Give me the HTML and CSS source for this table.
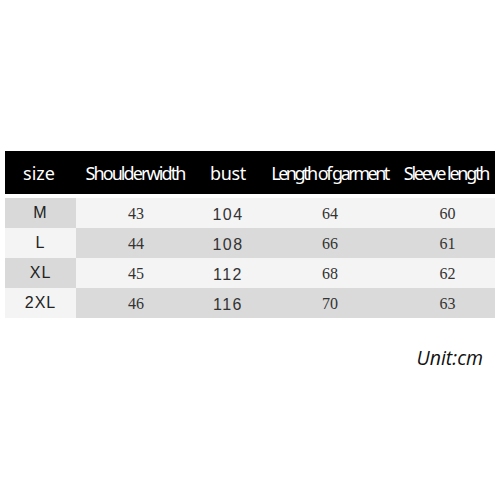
FILE: index.html
```html
<!DOCTYPE html>
<html>
<head>
<meta charset="utf-8">
<link rel="stylesheet" href="styles.css">
</head>
<body>
<div class="page">
  <div class="table">
    <div class="head">
      <div class="hc first">size</div>
      <div class="hc tight">Shoulderwidth</div>
      <div class="hc bust">bust</div>
      <div class="hc tight garment">Length of garment</div>
      <div class="hc tight sleeve">Sleeve length</div>
    </div>
    <div class="row odd">
      <div class="c sz">M</div><div class="c num">43</div><div class="c sans">104</div><div class="c num">64</div><div class="c num">60</div>
    </div>
    <div class="row even">
      <div class="c sz">L</div><div class="c num">44</div><div class="c sans">108</div><div class="c num">66</div><div class="c num">61</div>
    </div>
    <div class="row odd">
      <div class="c sz">XL</div><div class="c num">45</div><div class="c sans">112</div><div class="c num">68</div><div class="c num">62</div>
    </div>
    <div class="row even">
      <div class="c sz">2XL</div><div class="c num">46</div><div class="c sans">116</div><div class="c num">70</div><div class="c num">63</div>
    </div>
  </div>
  <div class="unit">Unit:cm</div>
</div>
</body>
</html>
```
FILE: styles.css
```css
html, body {
  margin: 0;
  padding: 0;
  background: #ffffff;
}
.page {
  width: 500px;
  height: 500px;
  padding-top: 151px;
  box-sizing: border-box;
}
.table {
  margin-left: 5px;
  width: 490px;
}
.head, .row {
  display: grid;
  grid-template-columns: 71px 120px 64px 140px 95px;
}
.head {
  background: #000000;
  height: 43px;
  margin-bottom: 4px;
}
.hc {
  color: #ffffff;
  font-family: "Noto Sans", sans-serif;
  font-size: 18px;
  display: flex;
  align-items: center;
  justify-content: center;
  padding-top: 1px;
  white-space: pre;
}
.hc.first {
  letter-spacing: 0;
  padding-right: 3px;
}
.hc.bust {
  letter-spacing: -0.3px;
}
.hc.tight {
  letter-spacing: -1.9px;
  word-spacing: -1px;
  padding-right: 2px;
}
.hc.garment {
  letter-spacing: -2.5px;
  word-spacing: 0;
  padding-right: 1px;
}
.hc.sleeve {
  letter-spacing: -2.25px;
  word-spacing: 0.5px;
  padding-right: 3px;
}
.row {
  height: 30px;
}
.c {
  display: flex;
  align-items: center;
  justify-content: center;
  color: #222222;
  font-size: 16px;
}
.odd .c { background: #f4f4f4; }
.odd .c.sz { background: #d9d9d9; }
.even .c { background: #dadada; }
.even .c.sz { background: #f4f4f4; }
.sz {
  font-family: "Liberation Sans", Arial, sans-serif;
  letter-spacing: 1px;
}
.sans {
  font-family: "Liberation Sans", Arial, sans-serif;
  letter-spacing: 1.5px;
  padding-top: 4px;
  color: #333333;
}
.num {
  font-family: "Liberation Serif", serif;
  font-size: 16px;
  padding-top: 2px;
  color: #333333;
}
.unit {
  margin-top: 26px;
  text-align: right;
  padding-right: 17px;
  font-family: "Open Sans", sans-serif;
  font-style: italic;
  font-size: 19.5px;
  color: #111111;
}
```
